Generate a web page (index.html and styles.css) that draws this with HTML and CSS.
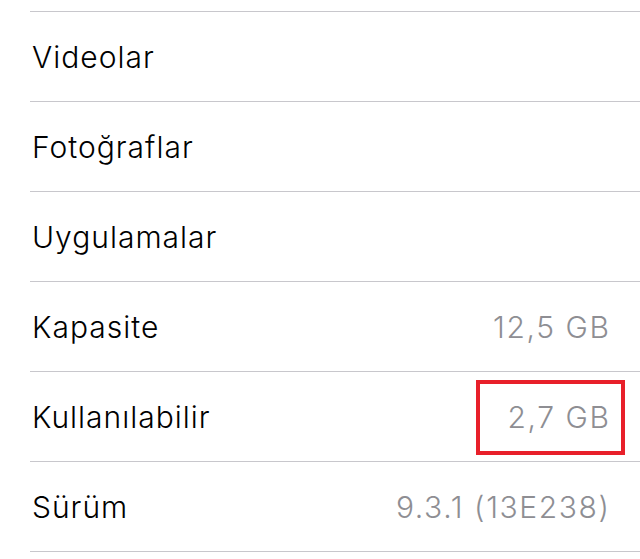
FILE: index.html
```html
<!DOCTYPE html>
<html lang="tr">
<head>
    <meta charset="utf-8">
    <title>Hakkında</title>
    <link rel="stylesheet" href="styles.css">
</head>
<body>
    <ul class="liste">
        <li class="satir"><span class="etiket">Videolar</span></li>
        <li class="satir"><span class="etiket">Fotoğraflar</span></li>
        <li class="satir"><span class="etiket">Uygulamalar</span></li>
        <li class="satir"><span class="etiket">Kapasite</span><span class="deger">12,5 GB</span></li>
        <li class="satir"><span class="etiket">Kullanılabilir</span><span class="deger vurgu">2,7 GB</span></li>
        <li class="satir son"><span class="etiket">Sürüm</span><span class="deger">9.3.1 (13E238)</span></li>
    </ul>
</body>
</html>
```

FILE: styles.css
```css
body {
    font-family: 'Inter', 'Roboto', sans-serif;
    background-color: #ffffff;
    margin: 0;
    padding: 0;
}
.liste {
    list-style: none;
    margin: 0;
    padding: 11px 0 0 30px;
}
.satir {
    display: flex;
    justify-content: space-between;
    align-items: center;
    height: 89px;
    border-top: 1px solid #c8c7cc;
    padding: 0 31px 0 2px;
    font-size: 30px;
    font-weight: 350;
    line-height: 36px;
}
.satir.son {
    border-bottom: 1px solid #c8c7cc;
}
.etiket {
    color: #000000;
    letter-spacing: 1px;
}
.deger {
    color: #8e8e93;
    letter-spacing: 1.6px;
    margin-right: -1.6px;
}
.vurgu {
    position: relative;
}
.vurgu::after {
    content: "";
    position: absolute;
    top: -19px;
    bottom: -20px;
    left: -32px;
    right: -14.4px;
    border: 4.5px solid #e8202a;
}
```
